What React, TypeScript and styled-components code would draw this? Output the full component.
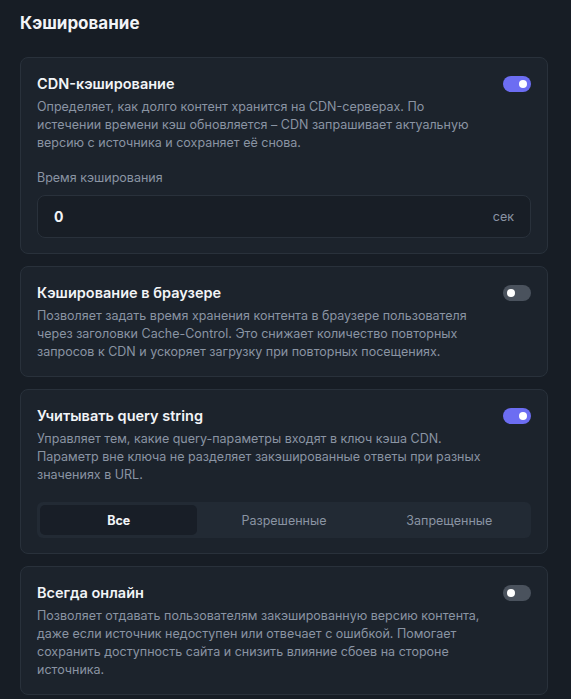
import React, { useState } from 'react'
import styled, { createGlobalStyle } from 'styled-components'

const BG = '#171d25'
const CARD = '#1c232c'
const BORDER = '#29313b'
const TEXT = '#f2f4f7'
const MUTED = '#8a94a3'
const ACCENT = '#6c6df2'

const GlobalStyle = createGlobalStyle`
  html, body {
    margin: 0;
    padding: 0;
    background: ${BG};
  }
  body {
    font-family: Inter, "Noto Sans", sans-serif;
    color: ${TEXT};
  }
`

const Page = styled.div`
  padding: 11px 23px 20px 20px;
  display: flex;
  flex-direction: column;
  gap: 12px;
`

const PageTitle = styled.h1`
  margin: 0 0 10px;
  font-size: 17px;
  line-height: 24px;
  font-weight: 700;
`

const Card = styled.section`
  background: ${CARD};
  border: 1px solid ${BORDER};
  border-radius: 8px;
  padding: 16px 16px 15px;
`

const CardHead = styled.div`
  display: flex;
  align-items: center;
  justify-content: space-between;
`

const CardTitle = styled.h2`
  margin: 0;
  font-size: 14.5px;
  line-height: 20px;
  font-weight: 600;
`

const Description = styled.p`
  margin: 4px 0 0;
  font-size: 12.5px;
  line-height: 18px;
  color: ${MUTED};
  max-width: 448px;
`

const Track = styled.button<{ $on: boolean }>`
  width: 28px;
  height: 16px;
  border: none;
  border-radius: 8px;
  background: ${p => (p.$on ? ACCENT : '#4a525d')};
  display: flex;
  align-items: center;
  justify-content: ${p => (p.$on ? 'flex-end' : 'flex-start')};
  padding: 0 4px;
  cursor: pointer;
  flex-shrink: 0;
`

const Knob = styled.span`
  width: 8px;
  height: 8px;
  border-radius: 50%;
  background: #fff;
`

const FieldLabel = styled.div`
  margin-top: 18px;
  font-size: 12.5px;
  line-height: 16px;
  color: ${MUTED};
`

const InputBox = styled.div`
  margin-top: 9px;
  height: 43px;
  box-sizing: border-box;
  border: 1px solid ${BORDER};
  border-radius: 8px;
  background: #181e26;
  display: flex;
  align-items: center;
  justify-content: space-between;
  padding: 0 16px;
`

const InputValue = styled.span`
  font-size: 14px;
  font-weight: 700;
`

const Unit = styled.span`
  font-size: 12.5px;
  color: ${MUTED};
`

const Segmented = styled.div`
  margin-top: 18px;
  height: 36px;
  background: #222a34;
  border-radius: 6px;
  padding: 3px;
  box-sizing: border-box;
  display: grid;
  grid-template-columns: repeat(3, 1fr);
  gap: 8px;
`

const Segment = styled.button<{ $active: boolean }>`
  border: none;
  border-radius: 5px;
  background: ${p => (p.$active ? '#181e27' : 'transparent')};
  color: ${p => (p.$active ? TEXT : MUTED)};
  font-family: inherit;
  font-size: 12.5px;
  font-weight: ${p => (p.$active ? 700 : 400)};
  cursor: pointer;
`

const Toggle = ({ on, onClick }: { on: boolean; onClick: () => void }) => (
  <Track $on={on} onClick={onClick}>
    <Knob />
  </Track>
)

export default function App() {
  const [cdn, setCdn] = useState(true)
  const [browser, setBrowser] = useState(false)
  const [query, setQuery] = useState(true)
  const [online, setOnline] = useState(false)
  const [mode, setMode] = useState('Все')

  return (
    <>
      <GlobalStyle />
      <Page>
        <PageTitle>Кэширование</PageTitle>

        <Card>
          <CardHead>
            <CardTitle>CDN-кэширование</CardTitle>
            <Toggle on={cdn} onClick={() => setCdn(!cdn)} />
          </CardHead>
          <Description>
            Определяет, как долго контент хранится на CDN-серверах. По истечении времени кэш
            обновляется – CDN запрашивает актуальную версию с источника и сохраняет её снова.
          </Description>
          <FieldLabel>Время кэширования</FieldLabel>
          <InputBox>
            <InputValue>0</InputValue>
            <Unit>сек</Unit>
          </InputBox>
        </Card>

        <Card>
          <CardHead>
            <CardTitle>Кэширование в браузере</CardTitle>
            <Toggle on={browser} onClick={() => setBrowser(!browser)} />
          </CardHead>
          <Description>
            Позволяет задать время хранения контента в браузере пользователя через заголовки
            Cache-Control. Это снижает количество повторных запросов к CDN и ускоряет загрузку
            при повторных посещениях.
          </Description>
        </Card>

        <Card>
          <CardHead>
            <CardTitle>Учитывать query string</CardTitle>
            <Toggle on={query} onClick={() => setQuery(!query)} />
          </CardHead>
          <Description>
            Управляет тем, какие query-параметры входят в ключ кэша CDN. Параметр вне ключа не
            разделяет закэшированные ответы при разных значениях в URL.
          </Description>
          <Segmented>
            {['Все', 'Разрешенные', 'Запрещенные'].map(m => (
              <Segment key={m} $active={mode === m} onClick={() => setMode(m)}>
                {m}
              </Segment>
            ))}
          </Segmented>
        </Card>

        <Card>
          <CardHead>
            <CardTitle>Всегда онлайн</CardTitle>
            <Toggle on={online} onClick={() => setOnline(!online)} />
          </CardHead>
          <Description>
            Позволяет отдавать пользователям закэшированную версию контента, даже если источник
            недоступен или отвечает с ошибкой. Помогает сохранить доступность сайта и снизить
            влияние сбоев на стороне источника.
          </Description>
        </Card>
      </Page>
    </>
  )
}
